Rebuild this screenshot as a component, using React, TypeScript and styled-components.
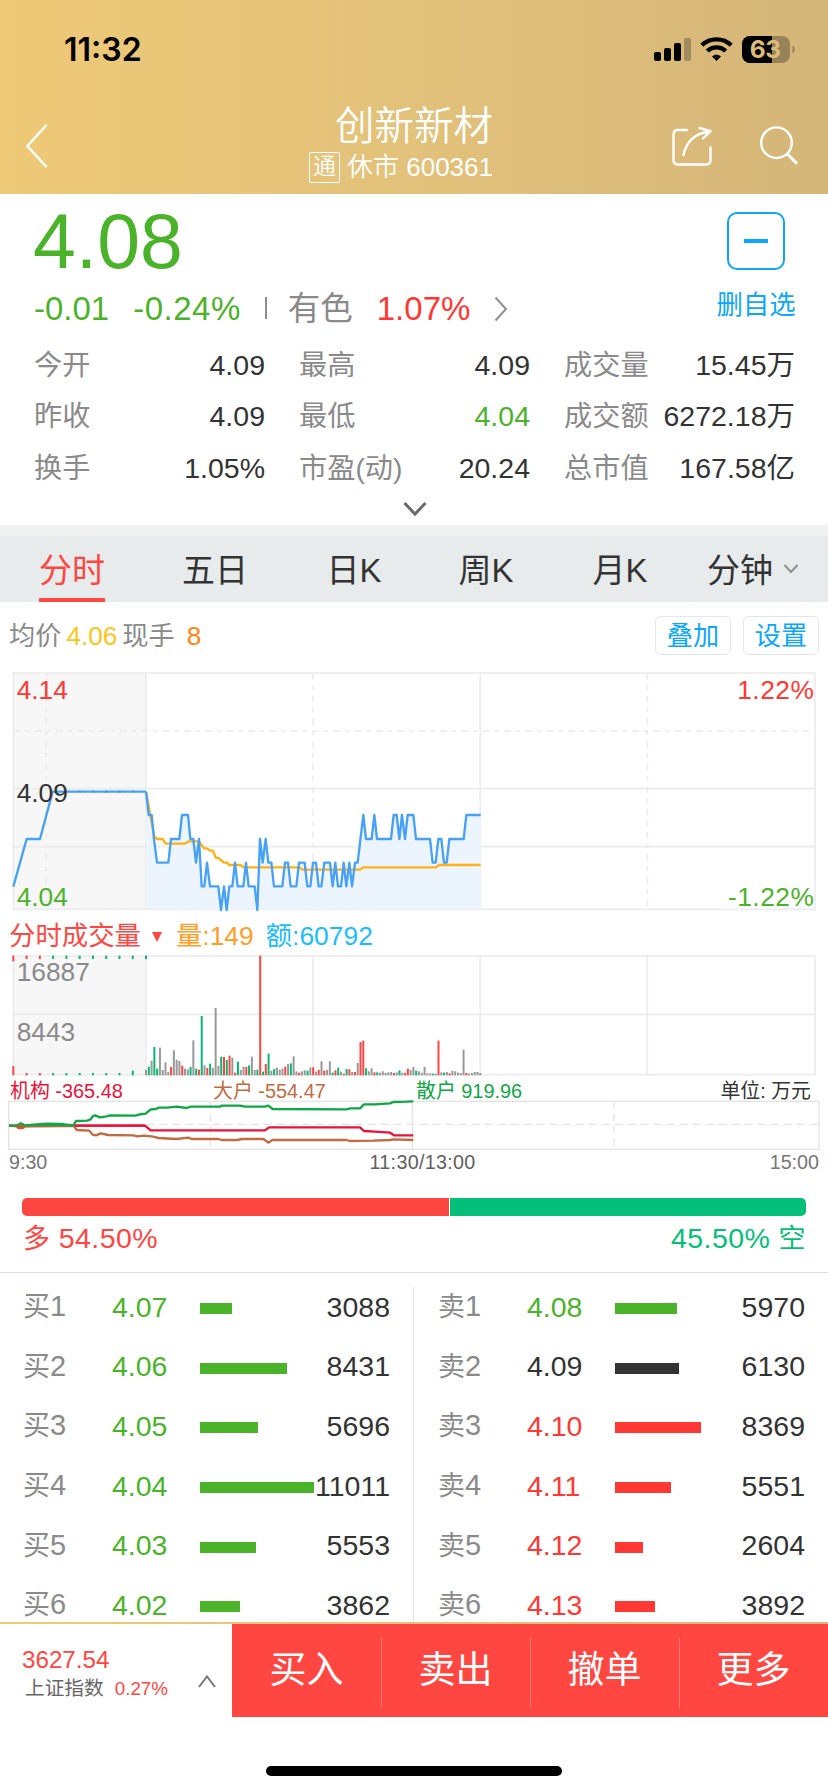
import React from "react";
import styled, { createGlobalStyle } from "styled-components";

const RED = "#ff3833";
const ACTION_RED = "#ff4641";
const GREEN = "#4bb32a";
const TEAL = "#03bf79";
const BLUE = "#0ca7fd";
const DARK = "#333333";
const GREY = "#8a8a8a";
const GOLD = "linear-gradient(90deg, #eec977 0%, #e2c17a 50%, #d4b679 100%)";

const GlobalStyle = createGlobalStyle`
  *, *::before, *::after { box-sizing: border-box; }
  body {
    margin: 0;
    background: #fff;
    color: ${DARK};
    font-family: "Liberation Sans", "Noto Sans CJK SC", sans-serif;
  }
  svg { display: block; flex: none; }
`;

const Screen = styled.div`
  width: 828px;
  height: 1792px;
  display: flex;
  flex-direction: column;
  overflow: hidden;
  background: #fff;
  white-space: nowrap;
`;

/* ---------- header ---------- */
const Header = styled.header`
  height: 194px;
  flex: none;
  background: ${GOLD};
`;

const StatusBar = styled.div`
  height: 98px;
  padding: 31px 32px 0 64px;
  display: flex;
  justify-content: space-between;
  align-items: flex-start;
`;

const Clock = styled.span`
  font: 600 32px/38px Inter, sans-serif;
  color: #000;
`;

const StatusIcons = styled.div`
  display: flex;
  gap: 9px;
  padding-top: 1px;
  align-items: flex-start;
`;

const NavBar = styled.div`
  height: 96px;
  padding: 0 30px 0 26px;
  display: flex;
`;

const NavIcons = styled.div`
  display: flex;
  gap: 48px;
  margin-left: auto;
  padding-top: 28px;
`;

const TitleBlock = styled.div`
  width: 185px;
  margin-left: 260px;
  display: flex;
  flex-direction: column;
  align-items: flex-end;
`;

const Title = styled.h1`
  margin: 0;
  font-size: 39.5px;
  line-height: 57px;
  font-weight: 350;
  color: #fff;
`;

const Subtitle = styled.div`
  height: 32px;
  margin-top: -4px;
  display: flex;
  align-items: center;
  gap: 7px;
  color: #fff;
  font-size: 26px;
  line-height: 34px;
  font-weight: 350;
`;

const Tag = styled.span`
  width: 31px;
  height: 31px;
  border: 1.5px solid #fff;
  border-radius: 2px;
  font-size: 23px;
  line-height: 27px;
  text-align: center;
`;

/* ---------- quote summary ---------- */
const Summary = styled.section`
  height: 331px;
  flex: none;
  padding: 0 32px 0 34px;
  display: flex;
  flex-direction: column;
`;

const QuoteTop = styled.div`
  display: flex;
  justify-content: space-between;
  height: 145px;
`;

const QuoteMain = styled.div`
  display: flex;
  flex-direction: column;
`;

const Price = styled.div`
  margin-left: -1px;
  font-size: 77px;
  line-height: 94px;
  color: ${GREEN};
`;

const ChangeRow = styled.div`
  display: flex;
  align-items: center;
  height: 42px;
  font-size: 33px;
  line-height: 42px;
`;

const Change = styled.span<{ $color: string; $gap?: number; $spacing?: number }>`
  color: ${(p) => p.$color};
  margin-right: ${(p) => p.$gap ?? 0}px;
  letter-spacing: ${(p) => p.$spacing ?? 0}em;
`;

const Sector = styled.span`
  color: ${GREY};
  font-size: 32.5px;
  margin-right: 24px;
`;

const ThinRule = styled.span`
  width: 2px;
  height: 22px;
  background: #8f8f8f;
  margin: 0 21px 2px 24px;
`;

const Watch = styled.div`
  width: 80px;
  padding-top: 18px;
  display: flex;
  flex-direction: column;
  align-items: center;
  color: ${BLUE};
  font-size: 26.4px;
  line-height: 35px;
`;

const MinusBox = styled.div`
  width: 58px;
  height: 58px;
  margin: 0 1px 18px 0;
  border: 2px solid ${BLUE};
  border-radius: 10px;
  display: flex;
  align-items: center;
  justify-content: center;
  &::after {
    content: "";
    width: 24px;
    height: 4px;
    background: ${BLUE};
  }
`;

const Stats = styled.div`
  display: grid;
  grid-template-columns: repeat(3, 231px);
  column-gap: 34px;
  grid-auto-rows: 51.5px;
`;

const Stat = styled.div`
  display: flex;
  justify-content: space-between;
  align-items: center;
  line-height: 52px;
`;

const StatLabel = styled.span`
  font-size: 28.2px;
  color: ${GREY};
`;

const StatValue = styled.span<{ $color?: string }>`
  font-size: 28.5px;
  color: ${(p) => p.$color ?? DARK};
`;

const Expand = styled.div`
  display: flex;
  justify-content: center;
  padding: 7px 0 0 0;
`;

/* ---------- tabs ---------- */
const Tabs = styled.nav`
  height: 77px;
  flex: none;
  border-top: 11px solid #f1f1f1;
  background: #e7ebec;
  display: grid;
  grid-template-columns: 144px 142px 136px 128px 140px 126px;
`;

const Tab = styled.div<{ $active?: boolean }>`
  display: flex;
  justify-content: center;
  align-items: center;
  gap: 10px;
  font-size: 33px;
  line-height: 69px;
  color: ${(p) => (p.$active ? ACTION_RED : DARK)};
  & > span {
    height: 66px;
    border-bottom: 4px solid ${(p) => (p.$active ? ACTION_RED : "transparent")};
  }
`;

/* ---------- chart toolbar ---------- */
const ChartBar = styled.div`
  height: 58px;
  flex: none;
  padding: 9px 9px 0 9px;
  display: flex;
  align-items: center;
  gap: 5px;
  font-size: 26.2px;
  line-height: 40px;
`;

const Tint = styled.span<{ $color: string; $push?: number }>`
  color: ${(p) => p.$color};
  margin-left: ${(p) => p.$push ?? 0}px;
`;

const Pills = styled.div`
  margin-left: auto;
  display: flex;
  gap: 12px;
`;

const Pill = styled.button`
  width: 76px;
  height: 39px;
  padding: 0;
  border: 1.5px solid #e4e7e9;
  border-radius: 6px;
  background: #fff;
  color: ${BLUE};
  font: inherit;
  line-height: 36px;
`;

const VolumeBar = styled.div`
  height: 37px;
  flex: none;
  padding: 5px 0 0 9px;
  display: flex;
  align-items: center;
  font-size: 26.4px;
  line-height: 38px;
  color: ${ACTION_RED};
`;

const FlowBar = styled.div`
  height: 23px;
  flex: none;
  padding: 2px 17px 0 10px;
  display: grid;
  grid-template-columns: 203px 203px 1fr auto;
  font-size: 20px;
  line-height: 24px;
`;

const FlowItem = styled.span<{ $color: string }>`
  color: ${(p) => p.$color};
  font-size: 19.9px;
`;

const TimeAxis = styled.div`
  height: 27px;
  flex: none;
  padding: 0 9px;
  display: grid;
  grid-template-columns: 1fr auto 1fr;
  font-size: 19.7px;
  line-height: 23px;
  color: #777;
  & > :nth-child(2) { color: #606060; padding-left: 17px; letter-spacing: 0.3px; }
  & > :last-child { text-align: right; }
`;

/* ---------- long / short ratio ---------- */
const Ratio = styled.section`
  height: 95px;
  flex: none;
  padding: 20px 22px 0;
  border-bottom: 1.5px solid #dedede;
`;

const RatioTrack = styled.div`
  height: 18px;
  display: flex;
  gap: 1px;
  border-radius: 5px;
  overflow: hidden;
`;

const RatioPart = styled.div<{ $share: number; $color: string }>`
  flex: ${(p) => p.$share} 0 0;
  background: ${(p) => p.$color};
`;

const RatioText = styled.div`
  display: flex;
  justify-content: space-between;
  margin-top: 2px;
  font-size: 28.5px;
  line-height: 40px;
  letter-spacing: 0.015em;
  & small { font-size: 27px; }
`;

/* ---------- order book ---------- */
const Book = styled.section`
  height: 349px;
  flex: none;
  display: grid;
  grid-template-columns: 414px 414px;
  overflow: hidden;
`;

const Side = styled.div<{ $offset: number; $ruled?: boolean }>`
  display: flex;
  flex-direction: column;
  padding: 4px 0 0 ${(p) => p.$offset}px;
  background: ${(p) =>
    p.$ruled ? "linear-gradient(#e2e2e2, #e2e2e2) 412.5px 14px / 1.5px 100% no-repeat" : "none"};
`;

const Level = styled.div`
  height: 59.7px;
  flex: none;
  display: grid;
  grid-template-columns: 89px 88px 77px 113px;
  align-items: center;
  font-size: 28.5px;
  line-height: 59px;
`;

const LevelName = styled.span`
  color: ${GREY};
  font-size: 29px;
  & small { font-size: 27px; }
`;

const LevelPrice = styled.span<{ $color: string }>`
  color: ${(p) => p.$color};
`;

const DepthBar = styled.i<{ $color: string }>`
  display: block;
  height: 11px;
  margin-top: 3px;
  background: ${(p) => p.$color};
`;

const Quantity = styled.span`
  text-align: right;
`;

/* ---------- bottom bar ---------- */
const Footer = styled.footer`
  height: 95px;
  flex: none;
  padding-top: 2px;
  background: ${GOLD};
  display: flex;
`;

const IndexBox = styled.div`
  width: 232px;
  background: #fff;
  padding: 21px 16px 0 22px;
  display: flex;
  justify-content: space-between;
`;

const IndexValue = styled.div`
  color: ${ACTION_RED};
  font-size: 24.2px;
  line-height: 30px;
`;

const IndexName = styled.div`
  padding-left: 3px;
  font-size: 19.7px;
  line-height: 27px;
  color: #666;
  display: flex;
  gap: 11px;
`;

const IndexChange = styled.span`
  color: ${ACTION_RED};
  font-size: 18.8px;
`;

const Caret = styled.div`
  padding-top: 30px;
`;

const Action = styled.button`
  flex: 1;
  height: 93px;
  padding: 0;
  border: 0;
  background: ${ACTION_RED};
  color: #fff;
  font: inherit;
  font-size: 37px;
  line-height: 86px;
  & + & {
    background: linear-gradient(#ff7a76, #ff7a76) 0 14px / 1px 70px no-repeat ${ACTION_RED};
  }
`;

const HomeBar = styled.div`
  width: 296px;
  height: 10px;
  margin: 49px auto 0;
  border-radius: 5px;
  background: #000;
`;

/* ---------- chart data (three units to one pixel) ---------- */
const PRE_OPEN = "40,680 80,537 120,537 158,395 438,395";

const PRICE_LINE =
  "438,395 446,465 455,465 462,537 471,608 505,608 513,537 538,537 546,465 564,465 571,537 580,537 588,608 597,537 " +
  "605,679 613,679 621,608 630,679 655,679 663,750 672,679 680,750 688,679 697,679 705,608 713,679 730,679 738,608 " +
  "746,679 764,679 772,750 780,537 788,608 797,537 805,608 814,608 822,679 847,679 855,608 864,608 872,679 889,679 " +
  "897,608 914,608 922,679 931,679 939,608 948,608 956,679 964,679 973,608 990,608 998,679 1006,608 1014,679 " +
  "1023,679 1031,608 1039,679 1048,608 1056,679 1065,608 1073,608 1090,465 1098,537 1115,537 1123,465 1131,537 " +
  "1173,537 1181,465 1190,465 1198,537 1206,465 1215,537 1223,465 1240,465 1248,537 1290,537 1298,608 1307,608 " +
  "1315,537 1324,537 1332,608 1340,608 1348,537 1391,537 1399,465 1442,465";

const AVERAGE_LINE =
  "438,395 463,530 472,537 488,537 497,551 555,551 565,544 597,544 612,565 621,565 630,572 639,572 647,593 655,594 " +
  "672,608 680,608 688,615 722,615 730,622 898,622 907,629 1080,629 1090,622 1308,622 1317,615 1442,615";

const VOLUMES = (
  "n16 g26 n44 g85 g20 n83 n16 n39 n10 r25 n75 n47 n43 r29 n20 n18 g25 n105 g20 r17 g178 n30 r22 g35 n22 n202 n29 g56 " +
  "r55 g46 r59 n53 r8 g41 n16 n26 r25 g30 n56 n16 g17 r359 g11 r34 g65 n14 g19 n23 n17 n20 r26 n34 g36 n57 n12 r8 n12 " +
  "n15 g14 n24 r24 n11 r16 n42 r14 n16 n42 g8 r15 g23 n11 r5 g19 r18 n10 r10 n37 r100 r104 g21 n12 n21 r9 g9 n8 n12 " +
  "n7 n9 n10 r7 n9 g15 n8 r7 r20 n16 n25 g14 n12 n8 n25 n6 n6 g5 n5 r104 n9 g8 n10 r6 n14 n12 n8 n7 n77 r7 n5 n7 n10 " +
  "n10 n7"
).split(" ");

const VOLUME_COLORS: Record<string, string> = { n: "#999999", g: "#0bb673", r: "#fa4743" };

const RETAIL_FLOW =
  "27,647 50,647 62,640 75,646 110,643 140,641 180,642 220,646 228,633 262,632 272,628 278,619 285,616 300,622 " +
  "320,619 330,616 405,617 425,612 437,611 452,598 468,597 475,593 500,593 530,590 560,594 572,590 660,590 665,587 " +
  "720,587 735,590 795,590 805,587 818,597 1040,598 1050,595 1080,595 1092,583 1125,583 1170,580 1180,576 1220,575 1240,574";
const FUND_FLOW =
  "27,647 435,647 452,661 795,661 807,652 1080,652 1092,663 1125,665 1170,668 1182,676 1240,676";
const WHALE_FLOW =
  "27,647 60,650 100,649 190,648 222,648 230,660 268,662 278,674 288,676 302,670 325,675 400,676 412,679 432,677 " +
  "460,680 475,684 530,687 565,683 575,687 655,687 665,690 712,690 725,687 790,687 806,698 817,690 1040,690 " +
  "1050,693 1120,692 1170,690 1180,688 1240,690";

const GRID = "#ececec";

function PriceChart() {
  return (
    <svg width="828" height="255" viewBox="0 0 2484 765" fontSize="79">
      <rect x="40" y="39" width="398" height="709" fill="#f7f7f7" />
      <g stroke={GRID} strokeWidth="5" fill="none">
        <rect x="40" y="39" width="2405" height="709" />
        <path d="M40 386H2445M40 560H2445M438 39V748M1441 39V748" />
        <path d="M40 213H2445" strokeDasharray="20 16 12 16" />
        <path d="M139 39V748M939 39V748M1942 39V748" strokeDasharray="20 16 14 18" />
      </g>
      <polygon points={`${PRICE_LINE} 1442,748 438,748`} fill="#ecf5fe" />
      <g fill="none" strokeWidth="7" strokeLinejoin="round">
        <polyline points={AVERAGE_LINE} stroke="#ffb014" />
        <polyline points={PRE_OPEN} stroke="#47a1f7" />
        <polyline points={PRICE_LINE} stroke="#47a1f7" />
      </g>
      <path d="M198 395H420" stroke="#3d8fe0" strokeWidth="8" strokeDasharray="3 37" />
      <text x="50" y="118" fill={RED}>4.14</text>
      <text x="50" y="427" fill={DARK}>4.09</text>
      <text x="50" y="738" fill={GREEN}>4.04</text>
      <g textAnchor="end" letterSpacing="1.5">
        <text x="2443" y="118" fill={RED}>1.22%</text>
        <text x="2443" y="738" fill={GREEN}>-1.22%</text>
      </g>
    </svg>
  );
}

function VolumeChart() {
  const ticks = Array.from({ length: 11 }, (_, i) => 40 + i * 39.8);
  return (
    <svg width="828" height="125" viewBox="0 126 2484 375" fontSize="79">
      <rect x="40" y="137" width="398" height="357" fill="#f7f7f7" />
      <g stroke={GRID} strokeWidth="5" fill="none">
        <rect x="40" y="138" width="2405" height="356" />
        <path d="M40 313H2445M438 138V494M939 138V494M1441 138V494M1942 138V494" />
      </g>
      {ticks.map((x, i) => (
        <g key={i} fill={i < 3 ? VOLUME_COLORS.r : VOLUME_COLORS.g}>
          <rect x={x - 3} y="137" width="6" height={i === 0 ? 17 : 10} />
          {i < 10 && (
            <rect x={x - 3} y={i === 0 ? 468 : i === 9 ? 482 : 489} width="6" height={i === 0 ? 28 : i === 9 ? 14 : 7} />
          )}
        </g>
      ))}
      {VOLUMES.map((v, i) => {
        const height = Number(v.slice(1));
        return (
          <rect key={i} x={435 + i * 8.357} y={496 - height} width="6" height={height} fill={VOLUME_COLORS[v[0]]} />
        );
      })}
      <text x="50" y="214" fill={GREY}>16887</text>
      <text x="50" y="392" fill={GREY}>8443</text>
    </svg>
  );
}

function FlowChart() {
  return (
    <svg width="828" height="51" viewBox="0 570 2484 153">
      <g stroke="#e4e4e4" strokeWidth="4" fill="none">
        <rect x="26" y="574" width="2431" height="144" />
        <path d="M1237 574V718" />
        <path d="M440 643H2457" strokeDasharray="24 15" />
        <path d="M631 574V718M1842 574V718" strokeDasharray="22 15" />
      </g>
      <g fill="none" strokeWidth="7" strokeLinejoin="round">
        <polyline points={FUND_FLOW} stroke="#ea1238" />
        <polyline points={WHALE_FLOW} stroke="#c26a40" />
        <polyline points={RETAIL_FLOW} stroke="#0fa745" />
      </g>
      <ellipse cx="62" cy="650" rx="13" ry="8" fill="#d0552f" />
      <path d="M27 647H220" stroke="#0fa745" strokeWidth="3" />
      <path d="M225 647H435" stroke="#ea1238" strokeWidth="7" />
    </svg>
  );
}

function SignalIcon() {
  return (
    <svg width="37" height="34" viewBox="0 -4 37 34">
      <rect x="0" y="16" width="7" height="9" rx="2" />
      <rect x="10" y="12" width="7" height="13" rx="2" />
      <rect x="20" y="7" width="7" height="18" rx="2" />
      <rect x="30" y="2" width="7" height="23" rx="2" opacity=".25" />
    </svg>
  );
}

function WifiIcon() {
  return (
    <svg width="33" height="34" viewBox="0 -4 33 34">
      <g fill="none" stroke="#000" strokeWidth="4.4">
        <path d="M1.8 9.2C10 1.4 23 1.4 31.2 9.2" />
        <path d="M7.2 15C12.5 10.1 20.5 10.1 25.8 15" />
      </g>
      <path d="M16.5 25l-4.5-4.6c2.5-2.2 6.5-2.2 9 0z" />
    </svg>
  );
}

function BatteryIcon() {
  return (
    <svg width="54" height="34" viewBox="0 -4 54 34">
      <defs>
        <clipPath id="charge">
          <rect width="30" height="27" />
        </clipPath>
      </defs>
      <rect width="48" height="27" rx="8" fill="#988358" />
      <rect width="48" height="27" rx="8" clipPath="url(#charge)" />
      <path d="M50.5 9.5c3 1.3 3 6.7 0 8z" fill="#988358" />
      <text x="23.200" y="22.300" textAnchor="middle" fill="#dbbc7a" fontFamily="Inter" fontWeight="700" fontSize="24.5" letterSpacing="-0.3">63</text>
    </svg>
  );
}

function BackIcon() {
  return (
    <svg width="22" height="96" viewBox="0 0 22 96" fill="none" stroke="#fff" strokeWidth="2.4">
      <path d="M20.5 27L1.5 48l19 21" />
    </svg>
  );
}

function ShareIcon() {
  return (
    <svg width="40" height="42" viewBox="0 0 40 42" fill="none" stroke="#fff" strokeWidth="2.4" strokeLinecap="round" strokeLinejoin="round">
      <path d="M15 4H6Q1.500 4 1.500 8.500V34Q1.500 38.500 6 38.500H34Q38.500 38.500 38.500 34V21.500" />
      <path d="M11.500 29C14 17 22 7.500 37.500 5.500M27.500 2L38.500 5.200L31 12.500" />
    </svg>
  );
}

function SearchIcon() {
  return (
    <svg width="38" height="42" viewBox="0 0 38 42" fill="none" stroke="#fff" strokeWidth="2.4">
      <circle cx="16.500" cy="16.700" r="15.300" />
      <path d="M27 27.500L37 37.700" strokeWidth="3" />
    </svg>
  );
}

const STATS: [string, string, string?][] = [
  ["今开", "4.09"], ["最高", "4.09"], ["成交量", "15.45万"],
  ["昨收", "4.09"], ["最低", "4.04", GREEN], ["成交额", "6272.18万"],
  ["换手", "1.05%"], ["市盈(动)", "20.24"], ["总市值", "167.58亿"],
];

type Order = { price: string; color: string; bar: number; qty: string };

const BIDS: Order[] = [
  { price: "4.07", color: GREEN, bar: 32, qty: "3088" },
  { price: "4.06", color: GREEN, bar: 87, qty: "8431" },
  { price: "4.05", color: GREEN, bar: 58, qty: "5696" },
  { price: "4.04", color: GREEN, bar: 114, qty: "11011" },
  { price: "4.03", color: GREEN, bar: 56, qty: "5553" },
  { price: "4.02", color: GREEN, bar: 40, qty: "3862" },
];

const ASKS: Order[] = [
  { price: "4.08", color: GREEN, bar: 62, qty: "5970" },
  { price: "4.09", color: DARK, bar: 64, qty: "6130" },
  { price: "4.10", color: RED, bar: 86, qty: "8369" },
  { price: "4.11", color: RED, bar: 56, qty: "5551" },
  { price: "4.12", color: RED, bar: 28, qty: "2604" },
  { price: "4.13", color: RED, bar: 40, qty: "3892" },
];

function Levels({ name, orders }: { name: string; orders: Order[] }) {
  return (
    <>
      {orders.map((o, i) => (
        <Level key={o.price}>
          <LevelName><small>{name}</small>{i + 1}</LevelName>
          <LevelPrice $color={o.color}>{o.price}</LevelPrice>
          <DepthBar $color={o.color} style={{ width: o.bar }} />
          <Quantity>{o.qty}</Quantity>
        </Level>
      ))}
    </>
  );
}

export default function App() {
  return (
    <>
      <GlobalStyle />
      <Screen>
        <Header>
          <StatusBar>
            <Clock>11:32</Clock>
            <StatusIcons>
              <SignalIcon />
              <WifiIcon />
              <BatteryIcon />
            </StatusIcons>
          </StatusBar>
          <NavBar>
            <BackIcon />
            <TitleBlock>
              <Title>创新新材</Title>
              <Subtitle>
                <Tag>通</Tag>
                <span>休市 600361</span>
              </Subtitle>
            </TitleBlock>
            <NavIcons>
              <ShareIcon />
              <SearchIcon />
            </NavIcons>
          </NavBar>
        </Header>

        <Summary>
          <QuoteTop>
            <QuoteMain>
              <Price>4.08</Price>
              <ChangeRow>
                <Change $color={GREEN} $gap={24}>-0.01</Change>
                <Change $color={GREEN} $spacing={0.015}>-0.24%</Change>
                <ThinRule />
                <Sector>有色</Sector>
                <Change $color={RED} $gap={24}>1.07%</Change>
                <svg width="14" height="26" viewBox="0 0 14 26" fill="none" stroke="#8f8f8f" strokeWidth="2">
                  <path d="M1.500 1.500L12 13L1.500 24.500" />
                </svg>
              </ChangeRow>
            </QuoteMain>
            <Watch>
              <MinusBox />
              删自选
            </Watch>
          </QuoteTop>
          <Stats>
            {STATS.map(([label, value, color]) => (
              <Stat key={label}>
                <StatLabel>{label}</StatLabel>
                <StatValue $color={color}>{value}</StatValue>
              </Stat>
            ))}
          </Stats>
          <Expand>
            <svg width="24" height="16" viewBox="0 0 24 16" fill="none" stroke="#6a6a6a" strokeWidth="3">
              <path d="M1.500 2L12 13L22.500 2" />
            </svg>
          </Expand>
        </Summary>

        <Tabs>
          <Tab $active><span>分时</span></Tab>
          <Tab><span>五日</span></Tab>
          <Tab><span>日K</span></Tab>
          <Tab><span>周K</span></Tab>
          <Tab><span>月K</span></Tab>
          <Tab>
            <span>分钟</span>
            <svg width="16" height="10" viewBox="0 0 16 10" fill="none" stroke="#8f8f8f" strokeWidth="2">
              <path d="M1.500 1L8 8L14.500 1" />
            </svg>
          </Tab>
        </Tabs>

        <ChartBar>
          <Tint $color={GREY}>均价</Tint>
          <Tint $color="#fcc519">4.06</Tint>
          <Tint $color={GREY}>现手</Tint>
          <Tint $color="#ff8410" $push={7}>8</Tint>
          <Pills>
            <Pill>叠加</Pill>
            <Pill>设置</Pill>
          </Pills>
        </ChartBar>
        <PriceChart />
        <VolumeBar>
          <span>分时成交量</span>
          <svg width="35" height="12" viewBox="0 0 35 12">
            <path d="M11 2H21L16 12Z" fill={ACTION_RED} />
          </svg>
          <Tint $color="#ff9d24">量:149</Tint>
          <Tint $color="#1abdff" $push={12}>额:60792</Tint>
        </VolumeBar>
        <VolumeChart />
        <FlowBar>
          <FlowItem $color="#ea1238">机构 -365.48</FlowItem>
          <FlowItem $color="#c26a40">大户 -554.47</FlowItem>
          <FlowItem $color="#0fa745">散户 919.96</FlowItem>
          <FlowItem $color={DARK}>单位: 万元</FlowItem>
        </FlowBar>
        <FlowChart />
        <TimeAxis>
          <span>9:30</span>
          <span>11:30/13:00</span>
          <span>15:00</span>
        </TimeAxis>

        <Ratio>
          <RatioTrack>
            <RatioPart $share={54.5} $color={ACTION_RED} />
            <RatioPart $share={45.5} $color={TEAL} />
          </RatioTrack>
          <RatioText>
            <Tint $color={ACTION_RED} $push={1}><small>多</small> 54.50%</Tint>
            <Tint $color={TEAL}>45.50% <small>空</small></Tint>
          </RatioText>
        </Ratio>

        <Book>
          <Side $offset={23} $ruled>
            <Levels name="买" orders={BIDS} />
          </Side>
          <Side $offset={24}>
            <Levels name="卖" orders={ASKS} />
          </Side>
        </Book>

        <Footer>
          <IndexBox>
            <div>
              <IndexValue>3627.54</IndexValue>
              <IndexName>
                上证指数
                <IndexChange>0.27%</IndexChange>
              </IndexName>
            </div>
            <Caret>
              <svg width="18" height="13" viewBox="0 0 18 13" fill="none" stroke="#777" strokeWidth="2">
                <path d="M1 12L9 1.500L17 12" />
              </svg>
            </Caret>
          </IndexBox>
          <Action>买入</Action>
          <Action>卖出</Action>
          <Action>撤单</Action>
          <Action>更多</Action>
        </Footer>
        <HomeBar />
      </Screen>
    </>
  );
}
